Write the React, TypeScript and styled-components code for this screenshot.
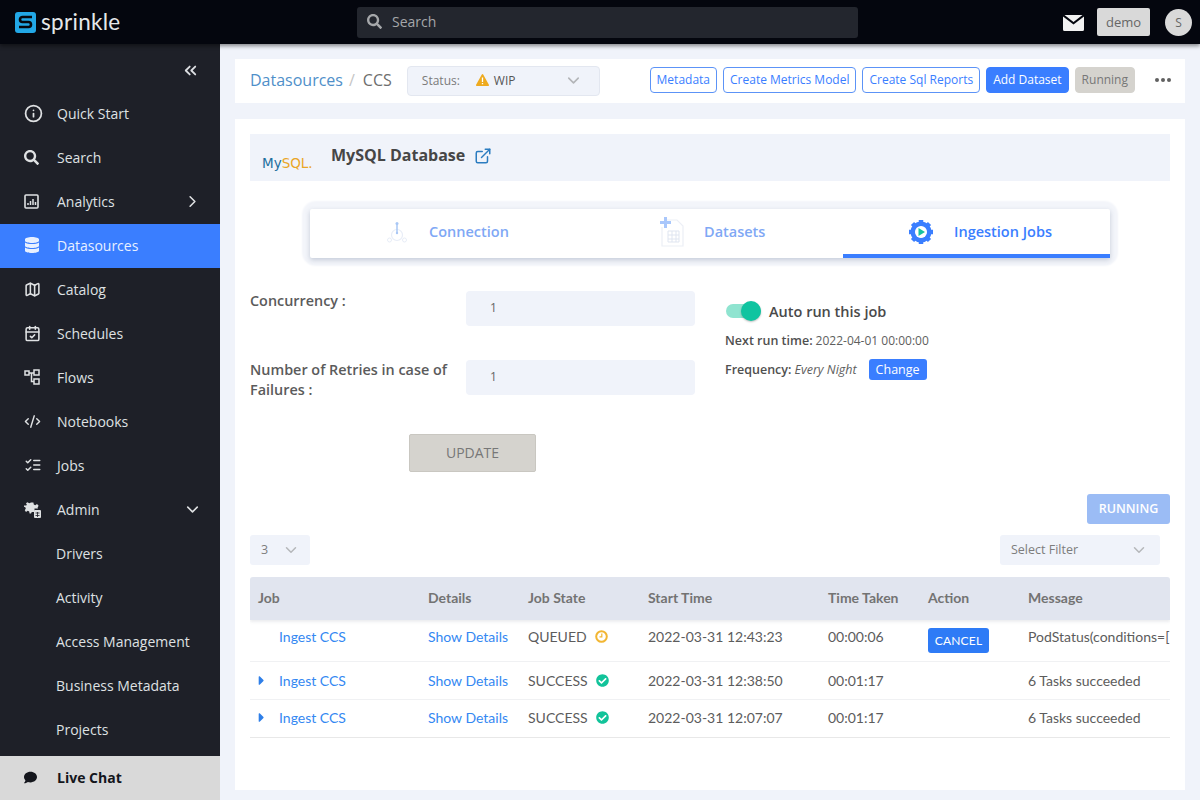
import React from 'react';
import styled, { createGlobalStyle } from 'styled-components';
import { FaCaretRight, FaCheckCircle, FaComment, FaDatabase, FaSearch } from 'react-icons/fa';
import { LuCalendarCheck, LuChevronDown, LuChevronRight, LuChevronsLeft, LuCodeXml, LuExternalLink, LuInfo, LuListChecks, LuMap } from 'react-icons/lu';

const GlobalStyle = createGlobalStyle`
  html, body { margin: 0; padding: 0; height: 100%; }
  body { font-family: 'Open Sans', 'Liberation Sans', sans-serif; background: #f0f3fa; overflow: hidden; }
  * { box-sizing: border-box; }
`;

const NAV_TOP = [
  { label: 'Quick Start', icon: <LuInfo size={19} strokeWidth={2.2} /> },
  { label: 'Search', icon: <FaSearch size={15} /> },
  { label: 'Analytics', icon: <ChartIcon />, arrow: 'right' },
  { label: 'Datasources', icon: <FaDatabase size={16} />, active: true },
  { label: 'Catalog', icon: <LuMap size={17} strokeWidth={2.2} /> },
  { label: 'Schedules', icon: <LuCalendarCheck size={17} strokeWidth={2.2} /> },
  { label: 'Flows', icon: <FlowIcon /> },
  { label: 'Notebooks', icon: <LuCodeXml size={17} strokeWidth={2} /> },
  { label: 'Jobs', icon: <LuListChecks size={18} strokeWidth={2} /> },
  { label: 'Admin', icon: <AdminIcon />, arrow: 'down' },
];

const NAV_SUB = ['Drivers', 'Activity', 'Access Management', 'Business Metadata', 'Projects'];

const JOBS = [
  { state: 'QUEUED', start: '2022-03-31 12:43:23', taken: '00:00:06', message: 'PodStatus(conditions=[', running: true },
  { state: 'SUCCESS', start: '2022-03-31 12:38:50', taken: '00:01:17', message: '6 Tasks succeeded' },
  { state: 'SUCCESS', start: '2022-03-31 12:07:07', taken: '00:01:17', message: '6 Tasks succeeded' },
];

function ChartIcon() {
  return (
    <svg width="15" height="15" viewBox="0 0 15 15" fill="none">
      <rect x="1" y="1" width="13" height="13" rx="1" stroke="currentColor" strokeWidth="1.6" />
      <path d="M4 11V9M6.5 11V7M9 11V5M11.5 11V8" stroke="currentColor" strokeWidth="1.5" />
    </svg>
  );
}

function FlowIcon() {
  return (
    <svg width="16" height="16" viewBox="0 0 16 16" fill="none" stroke="currentColor" strokeWidth="1.5">
      <rect x="1" y="2" width="4" height="4" />
      <rect x="10" y="1" width="5" height="5" />
      <rect x="10" y="10" width="5" height="5" />
      <path d="M5 4h5M7.5 4v8.5H10" />
    </svg>
  );
}

function AdminIcon() {
  return (
    <svg width="17" height="17" viewBox="0 0 17 17">
      <path
        fill="currentColor"
        d="M6 0h2.4l.4 2 1.5.7L12 1.600l1.600 1.600-1 1.700.4 1H9.500v3.500H6.800L6 11H4.600l-.4-2-1.500-.7L1 9.400-.2 7.800l1-1.700L.3 4.700-1 4.300V3h2.300l.5-1.300L.9 .8 2.500-.2l1.700 1 1.300-.5z"
        transform="translate(1 1.500)"
      />
      <rect x="10" y="9" width="7" height="8" rx="1" fill="currentColor" />
      <path d="M11.500 12h4M11.500 14.500h4M13.500 11v5" stroke="#1e2028" strokeWidth=".8" />
    </svg>
  );
}

function LogoMark() {
  return (
    <svg width="21" height="21" viewBox="0 0 21 21">
      <rect width="21" height="21" rx="3" fill="#22a7e6" />
      <path d="M17 5H7.500a2.500 2.500 0 0 0 0 5h6a2.500 2.500 0 0 1 0 5H4" fill="none" stroke="#07090f" strokeWidth="2.600" />
    </svg>
  );
}

function MailIcon() {
  return (
    <svg width="21" height="16" viewBox="0 0 21 16" style={{ marginTop: 2 }}>
      <path fill="#f2f2f2" d="M1.500 0h18L10.500 7zM0 1.500l10.500 8 10.500-8V14.500a1.500 1.500 0 0 1-1.500 1.500h-18A1.500 1.500 0 0 1 0 14.500z" />
    </svg>
  );
}

function WarnIcon() {
  return (
    <svg width="13" height="12" viewBox="0 0 13 12">
      <path fill="#eeaa1f" d="M6.500 0a.8.8 0 0 1 .7.4l5.700 10.300a.8.8 0 0 1-.7 1.300H.8a.8.8 0 0 1-.7-1.300L5.800.4a.8.8 0 0 1 .7-.4z" />
      <path stroke="#fff" strokeWidth="1.300" d="M6.500 3.500v4.500M6.500 9v1.300" />
    </svg>
  );
}

function ConnectionIcon() {
  return (
    <svg width="20" height="22" viewBox="0 0 20 22" fill="none">
      <circle cx="10" cy="14" r="5.500" stroke="#e8edf7" strokeWidth="1.200" />
      <path d="M10 3v9" stroke="#a9c7f5" strokeWidth="1.500" />
      <circle cx="10" cy="2.500" r="1.500" fill="#a9c7f5" />
      <circle cx="10" cy="12" r="1.200" fill="#a9c7f5" />
      <circle cx="2.500" cy="19" r="2" stroke="#e8edf7" />
      <circle cx="17.500" cy="19" r="2" stroke="#e8edf7" />
    </svg>
  );
}

function DatasetIcon() {
  return (
    <svg width="24" height="30" viewBox="0 0 24 30" fill="none">
      <path d="M4 3h13l6 6v20H2V10" stroke="#eceff6" strokeWidth="1.200" />
      <path d="M8 14h11v11H8zM8 18h11M8 22h11M12 14v11M16 14v11" stroke="#dfe5f0" strokeWidth="1" />
      <path d="M5.500 0v11M0 5.500h11" stroke="#a9c7fb" strokeWidth="3" />
    </svg>
  );
}

function GearPlayIcon() {
  return (
    <svg width="24" height="24" viewBox="0 0 24 24">
      <circle cx="12" cy="12" r="8" fill="none" stroke="#3a7eff" strokeWidth="5" />
      <path
        stroke="#3a7eff"
        strokeWidth="4.500"
        d="M12 0v4M12 20v4M0 12h4M20 12h4M3.500 3.500l3 3M17.500 17.500l3 3M20.500 3.500l-3 3M6.500 17.500l-3 3"
      />
      <circle cx="12" cy="12" r="6" fill="#fff" />
      <path d="M9.500 8l6.500 4-6.500 4z" fill="#19c2a0" />
    </svg>
  );
}

function ClockBadge() {
  return (
    <svg width="13" height="13" viewBox="0 0 13 13" fill="none">
      <circle cx="6.500" cy="6.500" r="5.300" stroke="#f2b632" strokeWidth="2" />
      <path d="M6.800 3.500v3.300H4.500" stroke="#f2b632" strokeWidth="1.200" />
    </svg>
  );
}

export default function App() {
  return (
    <>
      <GlobalStyle />
      <Page>
        <TopBar>
          <Logo>
            <LogoMark />
            <LogoText>sprinkle</LogoText>
          </Logo>
          <SearchBar>
            <FaSearch size={15} />
            <span>Search</span>
          </SearchBar>
          <TopRight>
            <MailIcon />
            <DemoButton>demo</DemoButton>
            <Avatar>S</Avatar>
          </TopRight>
        </TopBar>
        <Body>
          <Sidebar>
            <Collapse>
              <LuChevronsLeft size={19} strokeWidth={2.3} />
            </Collapse>
            <NavList>
              {NAV_TOP.map((item) => (
                <NavItem key={item.label} $active={item.active}>
                  <NavIcon>{item.icon}</NavIcon>
                  <span>{item.label}</span>
                  {item.arrow === 'right' && <NavArrow><LuChevronRight size={19} /></NavArrow>}
                  {item.arrow === 'down' && <NavArrow><LuChevronDown size={19} /></NavArrow>}
                </NavItem>
              ))}
              {NAV_SUB.map((label) => (
                <SubItem key={label}>{label}</SubItem>
              ))}
            </NavList>
            <LiveChat>
              <NavIcon><FaComment size={13} /></NavIcon>
              <span>Live Chat</span>
            </LiveChat>
          </Sidebar>
          <Main>
            <HeaderCard>
              <Crumb>Datasources</Crumb>
              <CrumbSep>/</CrumbSep>
              <CrumbCurrent>CCS</CrumbCurrent>
              <StatusSelect>
                <StatusLabel>Status:</StatusLabel>
                <WarnIcon />
                <StatusValue>WIP</StatusValue>
                <SelectChevron><LuChevronDown size={19} /></SelectChevron>
              </StatusSelect>
              <HeaderActions>
                <OutlineButton>Metadata</OutlineButton>
                <OutlineButton>Create Metrics Model</OutlineButton>
                <OutlineButton>Create Sql Reports</OutlineButton>
                <PrimaryButton>Add Dataset</PrimaryButton>
                <GreyButton>Running</GreyButton>
                <Dots><i /><i /><i /></Dots>
              </HeaderActions>
            </HeaderCard>
            <ContentCard>
              <Banner>
                <MysqlLogo><b>My</b><em>SQL.</em></MysqlLogo>
                <BannerTitle>MySQL Database</BannerTitle>
                <BannerLink><LuExternalLink size={18} strokeWidth={2} /></BannerLink>
              </Banner>
              <TabsHalo>
                <Tabs>
                  <Tab $width={270} $pad={75}>
                    <TabIcon><ConnectionIcon /></TabIcon>
                    <TabLabel>Connection</TabLabel>
                  </Tab>
                  <Tab $width={263} $pad={80}>
                    <TabIcon><DatasetIcon /></TabIcon>
                    <TabLabel>Datasets</TabLabel>
                  </Tab>
                  <Tab $width={267} $pad={66} $active>
                    <TabIcon><GearPlayIcon /></TabIcon>
                    <TabLabel $active>Ingestion Jobs</TabLabel>
                  </Tab>
                </Tabs>
              </TabsHalo>
              <FormArea>
                <FormLeft>
                  <FormRow>
                    <FormLabel>Concurrency :</FormLabel>
                    <NumberField>1</NumberField>
                  </FormRow>
                  <FormRow>
                    <FormLabel>Number of Retries in case of Failures :</FormLabel>
                    <NumberField>1</NumberField>
                  </FormRow>
                  <UpdateButton>UPDATE</UpdateButton>
                </FormLeft>
                <FormRight>
                  <AutoRun>
                    <Toggle><ToggleKnob /></Toggle>
                    <span>Auto run this job</span>
                  </AutoRun>
                  <InfoLine><b>Next run time:</b> <InfoValue>2022-04-01 00:00:00</InfoValue></InfoLine>
                  <InfoLine>
                    <b>Frequency:</b> <em>Every Night</em>
                    <ChangeButton>Change</ChangeButton>
                  </InfoLine>
                </FormRight>
              </FormArea>
              <RunningRow>
                <RunningButton>RUNNING</RunningButton>
              </RunningRow>
              <FilterRow>
                <PageSelect>
                  <span>3</span>
                  <LuChevronDown size={18} />
                </PageSelect>
                <FilterSelect>
                  <span>Select Filter</span>
                  <LuChevronDown size={18} />
                </FilterSelect>
              </FilterRow>
              <Table>
                <HeadRow>
                  <span>Job</span>
                  <span>Details</span>
                  <span>Job State</span>
                  <span>Start Time</span>
                  <span>Time Taken</span>
                  <span>Action</span>
                  <span>Message</span>
                </HeadRow>
                {JOBS.map((job) => (
                  <JobRow key={job.start} $tall={job.running}>
                    <JobCell>
                      <Caret>{!job.running && <FaCaretRight size={15} />}</Caret>
                      <TableLink>Ingest CCS</TableLink>
                    </JobCell>
                    <TableLink>Show Details</TableLink>
                    <StateCell>
                      {job.state}
                      {job.running ? <ClockBadge /> : <FaCheckCircle size={13} color="#12c39a" />}
                    </StateCell>
                    <span>{job.start}</span>
                    <span>{job.taken}</span>
                    <span>{job.running && <CancelButton>CANCEL</CancelButton>}</span>
                    <MessageCell>{job.message}</MessageCell>
                  </JobRow>
                ))}
              </Table>
            </ContentCard>
          </Main>
        </Body>
      </Page>
    </>
  );
}

const Page = styled.div`
  display: flex;
  flex-direction: column;
  width: 1200px;
  height: 800px;
  overflow: hidden;
`;

const TopBar = styled.header`
  display: flex;
  align-items: center;
  height: 44px;
  padding: 0 8px 0 15px;
  background: #04060e;
  box-shadow: 0 2px 4px rgba(0, 0, 0, 0.45);
  position: relative;
  z-index: 2;
`;

const Logo = styled.div`
  display: flex;
  align-items: center;
  gap: 5px;
  width: 342px;
`;

const LogoText = styled.span`
  font-family: 'Lato', sans-serif;
  font-size: 22.500px;
  letter-spacing: 0.3px;
  color: #e6e8ea;
  line-height: 1;
`;

const SearchBar = styled.div`
  display: flex;
  align-items: center;
  gap: 10px;
  width: 501px;
  height: 31px;
  padding: 0 10px 1px;
  border-radius: 3px;
  background: #23262e;
  color: #a5a7aa;
  font-size: 14px;
`;

const TopRight = styled.div`
  display: flex;
  align-items: center;
  margin-left: auto;
`;

const DemoButton = styled.div`
  width: 53px;
  height: 28px;
  margin-left: 13px;
  border-radius: 2px;
  background: #d9d9d9;
  color: #666;
  font-size: 13px;
  line-height: 28px;
  text-align: center;
`;

const Avatar = styled.div`
  width: 27px;
  height: 27px;
  margin-left: 15px;
  border-radius: 50%;
  background: #d9d9d9;
  color: #666;
  font-size: 12px;
  line-height: 27px;
  text-align: center;
`;

const Body = styled.div`
  display: flex;
  flex: 1;
  min-height: 0;
`;

const Sidebar = styled.aside`
  display: flex;
  flex-direction: column;
  flex: none;
  width: 220px;
  background: #1e2028;
  color: #dfe1e3;
`;

const Collapse = styled.div`
  display: flex;
  justify-content: flex-end;
  align-items: center;
  height: 48px;
  padding: 5px 20px 0 0;
  color: #dcdee2;
`;

const NavList = styled.nav`
  display: flex;
  flex-direction: column;
  flex: 1;
`;

const NavItem = styled.div<{ $active?: boolean }>`
  display: flex;
  align-items: center;
  flex: none;
  height: 44px;
  padding: 0 18px 2px 24px;
  font-size: 14px;
  background: ${(p) => (p.$active ? '#3a7eff' : 'transparent')};
  color: ${(p) => (p.$active ? '#e8f0ff' : '#dfe1e3')};
`;

const NavIcon = styled.span`
  display: flex;
  align-items: center;
  justify-content: flex-start;
  flex: none;
  width: 33px;
`;

const NavArrow = styled.span`
  display: flex;
  margin-left: auto;
`;

const SubItem = styled.div`
  flex: none;
  height: 44px;
  padding-left: 56px;
  font-size: 14px;
  line-height: 44px;
  color: #dfe1e3;
`;

const LiveChat = styled.div`
  display: flex;
  align-items: center;
  flex: none;
  height: 44px;
  padding: 0 0 2px 24px;
  background: #d9d9d9;
  color: #14161c;
  font-size: 14px;
  font-weight: 700;
`;

const Main = styled.main`
  display: flex;
  flex-direction: column;
  flex: 1;
  min-width: 0;
  padding: 15px 15px 10px;
  gap: 16px;
`;

const HeaderCard = styled.div`
  display: flex;
  align-items: center;
  flex: none;
  height: 44px;
  padding: 0 14px 0 15px;
  background: #fff;
`;

const Crumb = styled.span`
  padding-bottom: 3px;
  color: #4f8fc9;
  font-size: 16px;
`;

const CrumbSep = styled.span`
  margin: 0 8px 0 6px;
  padding-bottom: 3px;
  color: #c5c5c5;
  font-size: 16px;
`;

const CrumbCurrent = styled.span`
  width: 29px;
  padding-bottom: 3px;
  color: #6e6e6e;
  font-size: 16px;
`;

const StatusSelect = styled.div`
  display: flex;
  align-items: center;
  width: 193px;
  height: 30px;
  margin-left: 15px;
  padding: 0 16px 2px 14px;
  border: 1px solid #e3e7f0;
  border-radius: 4px;
  background: #f0f3fa;
  font-size: 12px;
  color: #555;
`;

const StatusLabel = styled.span`
  width: 54px;
  color: #7b7b7b;
`;

const StatusValue = styled.span`
  margin-left: 5px;
`;

const SelectChevron = styled.span`
  display: flex;
  margin-left: auto;
  color: #b3b5b8;
`;

const HeaderActions = styled.div`
  display: flex;
  align-items: center;
  gap: 6px;
  margin-left: auto;
  padding-bottom: 2px;
`;

const OutlineButton = styled.button`
  height: 26px;
  padding: 0 6px 2px;
  border: 1px solid #5c93f7;
  border-radius: 4px;
  background: #fff;
  color: #3a7eff;
  font: 12px 'Open Sans', sans-serif;
`;

const PrimaryButton = styled(OutlineButton)`
  border-color: #3a7eff;
  background: #3a7eff;
  color: #fff;
`;

const GreyButton = styled(OutlineButton)`
  border-color: #d5d3ce;
  background: #d5d3ce;
  color: #777;
`;

const Dots = styled.div`
  display: flex;
  gap: 2px;
  margin: 0 0 0 14px;

  i {
    width: 4px;
    height: 4px;
    border-radius: 50%;
    background: #606060;
  }
`;

const ContentCard = styled.section`
  display: flex;
  flex-direction: column;
  flex: 1;
  min-height: 0;
  padding: 15px;
  background: #fff;
`;

const Banner = styled.div`
  display: flex;
  align-items: center;
  flex: none;
  height: 47px;
  padding-left: 12px;
  background: #f0f3fa;
`;

const MysqlLogo = styled.div`
  width: 69px;
  padding-top: 11px;
  font: 13.500px 'DejaVu Sans', sans-serif;

  b { font-weight: 400; color: #1d6f9e; }
  em { font-style: normal; color: #eaa626; }
`;

const BannerTitle = styled.h2`
  margin: 0 0 5px;
  color: #464646;
  font-size: 16px;
  font-weight: 700;
`;

const BannerLink = styled.span`
  display: flex;
  margin: 0 0 3px 9px;
  color: #2b7cc0;
`;

const TabsHalo = styled.div`
  flex: none;
  width: 800px;
  margin: 28px 0 0 60px;
  box-shadow: 0 0 2px 8px #f3f5fa;
  border-radius: 6px;
`;

const Tabs = styled.div`
  display: flex;
  height: 49px;
  background: #fff;
  border-radius: 2px;
  box-shadow: 0 2px 5px rgba(90, 105, 140, 0.3);
`;

const Tab = styled.div<{ $width: number; $pad: number; $active?: boolean }>`
  display: flex;
  align-items: center;
  justify-content: flex-start;
  width: ${(p) => p.$width}px;
  padding-left: ${(p) => p.$pad}px;
  border-bottom: 4px solid ${(p) => (p.$active ? '#3a7eff' : 'transparent')};
`;

const TabIcon = styled.span`
  display: flex;
  justify-content: center;
  flex: none;
  width: 24px;
  margin-right: 20px;
`;

const TabLabel = styled.span<{ $active?: boolean }>`
  margin-left: ${(p) => (p.$active ? '1px' : '0')};
  color: ${(p) => (p.$active ? '#3a7eff' : '#7fa8f5')};
  font-size: 14.500px;
  font-weight: 600;
`;

const FormArea = styled.div`
  display: flex;
  flex: none;
  margin-top: 33px;
`;

const FormLeft = styled.div`
  display: flex;
  flex-direction: column;
  flex: none;
  width: 445px;
`;

const FormRow = styled.div`
  display: flex;
  align-items: flex-start;
  height: 69px;
`;

const FormLabel = styled.label`
  flex: none;
  width: 216px;
  color: #5b5b5b;
  font-size: 14.400px;
  font-weight: 600;
  line-height: 20px;
`;

const NumberField = styled.div`
  width: 229px;
  height: 35px;
  padding: 0 0 2px 24px;
  border-radius: 4px;
  background: #f0f3fa;
  color: #666;
  font-size: 12px;
  line-height: 33px;
`;

const UpdateButton = styled.button`
  align-self: flex-start;
  width: 127px;
  height: 38px;
  margin: 5px 0 0 159px;
  padding-bottom: 3px;
  border: 1px solid #c9c7c1;
  border-radius: 2px;
  background: #d5d3ce;
  color: #777;
  font: 14px 'Open Sans', sans-serif;
`;

const FormRight = styled.div`
  display: flex;
  flex-direction: column;
  margin-left: 30px;
`;

const AutoRun = styled.div`
  display: flex;
  align-items: center;
  gap: 8px;
  height: 24px;
  margin: 8px 0 0 1px;
  color: #4a4a4a;
  font-size: 14.500px;
  font-weight: 600;
`;

const Toggle = styled.div`
  position: relative;
  width: 35px;
  height: 14px;
  border-radius: 7px;
  background: #8fe4d0;
`;

const ToggleKnob = styled.div`
  position: absolute;
  top: -3px;
  right: 0;
  width: 20px;
  height: 20px;
  border-radius: 50%;
  background: #0fc4a0;
  box-shadow: 0 1px 2px rgba(0, 0, 0, 0.25);
`;

const InfoLine = styled.div`
  display: flex;
  align-items: center;
  gap: 3px;
  height: 21px;
  margin-top: 7px;
  color: #5e5e5e;
  font-size: 12.500px;

  b { color: #505050; font-weight: 600; }
  &:last-child { margin-top: 8px; }
`;

const InfoValue = styled.span`
  font-size: 12px;
`;

const ChangeButton = styled.button`
  height: 21px;
  margin-left: 9px;
  padding: 0 7px 1px;
  border: 0;
  border-radius: 3px;
  background: #3a7eff;
  color: #fff;
  font: 12.500px 'Open Sans', sans-serif;
`;

const RunningRow = styled.div`
  display: flex;
  justify-content: flex-end;
  flex: none;
  margin-top: 22px;
`;

const RunningButton = styled.button`
  width: 83px;
  height: 30px;
  padding-bottom: 2px;
  border: 0;
  border-radius: 3px;
  background: #9bbcf5;
  color: #fff;
  font: 600 12.500px 'Open Sans', sans-serif;
`;

const FilterRow = styled.div`
  display: flex;
  justify-content: space-between;
  flex: none;
  margin-top: 11px;
  padding-right: 10px;
`;

const SelectBox = styled.div`
  display: flex;
  align-items: center;
  justify-content: space-between;
  height: 30px;
  padding: 0 10px 1px 11px;
  border-radius: 3px;
  background: #f0f3fa;
  color: #7d7d7d;
  font-size: 12.500px;

  svg { color: #b5b7ba; }
`;

const PageSelect = styled(SelectBox)`
  width: 60px;
`;

const FilterSelect = styled(SelectBox)`
  width: 160px;
  padding-right: 12px;
`;

const Table = styled.div`
  display: flex;
  flex-direction: column;
  flex: none;
  margin-top: 12px;
  overflow: hidden;
  font-family: 'Lato', 'Liberation Sans', sans-serif;
  font-size: 14px;
  color: #5c5c5c;
`;

const columns = '170px 100px 120px 180px 100px 100px minmax(0, 1fr)';

const HeadRow = styled.div`
  display: grid;
  grid-template-columns: ${columns};
  align-items: center;
  height: 43px;
  padding: 0 0 3px 8px;
  border-radius: 3px 3px 0 0;
  background: #e1e5ef;
  box-shadow: 0 2px 3px rgba(180, 185, 190, 0.25);
  color: #737373;
  font-weight: 700;
`;

const JobRow = styled.div<{ $tall?: boolean }>`
  display: grid;
  grid-template-columns: ${columns};
  align-items: ${(p) => (p.$tall ? 'start' : 'center')};
  height: ${(p) => (p.$tall ? '42px' : '38px')};
  padding: ${(p) => (p.$tall ? '8px 0 0 8px' : '0 0 1px 8px')};
  border-bottom: 1px solid #f0f1f3;

  &:last-child {
    padding-bottom: 3px;
    border-bottom-color: #e8e8e8;
  }
`;

const JobCell = styled.span`
  display: flex;
  align-items: center;
`;

const Caret = styled.span`
  display: flex;
  flex: none;
  width: 21px;
  margin-left: -4px;
  color: #2f7fe8;

  & + a { margin-left: 4px; }
`;

const TableLink = styled.a`
  color: #3488f2;
`;

const StateCell = styled.span`
  display: flex;
  align-items: center;
  gap: 8px;
`;

const MessageCell = styled.span`
  white-space: nowrap;
`;

const CancelButton = styled.button`
  display: block;
  width: 61px;
  height: 25px;
  padding-bottom: 2px;
  border: 0;
  border-radius: 3px;
  background: #2e7bf6;
  color: #fff;
  font: 12px 'Lato', sans-serif;
  letter-spacing: 0.2px;
`;
